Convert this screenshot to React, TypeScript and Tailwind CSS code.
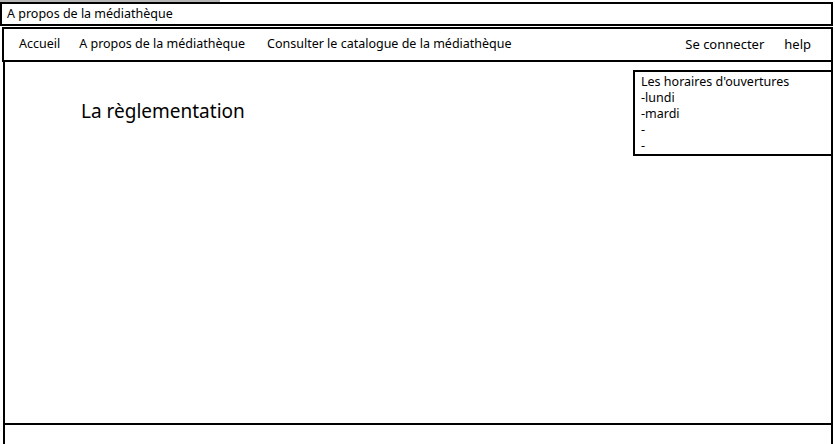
export default function App() {
  const font = { fontFamily: '"Noto Sans", "Liberation Sans", sans-serif' };
  return (
    <div
      className="flex h-[444px] w-[835px] flex-col overflow-hidden bg-white text-[12.5px] text-black"
      style={font}
    >
      <div className="h-[2px] w-[220px] shrink-0 bg-[#b5b5b5]" />
      <div className="flex h-[24px] shrink-0 items-center border-2 border-black pl-[5px] mr-[2px]">
        A propos de la médiathèque
      </div>
      <nav className="mt-[1px] ml-[2px] mr-[2px] flex h-[35px] shrink-0 items-center border-2 border-black pl-[15px] pr-[20px]">
        <span>Accueil</span>
        <span className="ml-[19px]">A propos de la médiathèque</span>
        <span className="ml-[22px]">Consulter le catalogue de la médiathèque</span>
        <span className="ml-auto text-[13px]">Se connecter</span>
        <span className="ml-[20px] text-[13px]">help</span>
      </nav>
      <main className="ml-[3px] mr-[2px] flex h-[363px] shrink-0 items-start justify-between border-x-2 border-b-2 border-black">
        <h1 className="ml-[76px] mt-[40px] text-[19px] leading-none">La règlementation</h1>
        <div className="mt-[8px] mr-[-2px] w-[200px] border-2 border-black px-[6px] pt-[2px] pb-0 leading-[16px]">
          <div>Les horaires d'ouvertures</div>
          <div>-lundi</div>
          <div>-mardi</div>
          <div>-</div>
          <div>-</div>
        </div>
      </main>
      <footer className="ml-[3px] mr-[2px] flex-1 border-x-2 border-black" />
    </div>
  );
}
